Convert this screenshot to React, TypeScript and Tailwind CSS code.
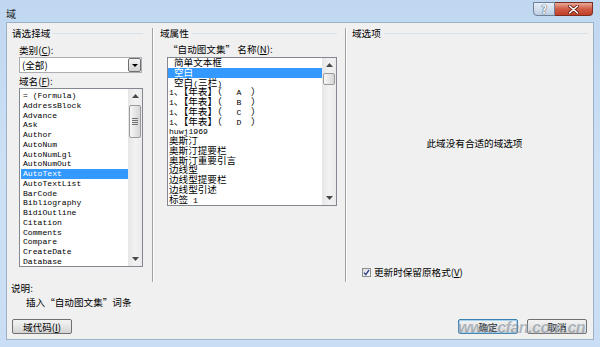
const leftFields = [
  "= (Formula)",
  "AddressBlock",
  "Advance",
  "Ask",
  "Author",
  "AutoNum",
  "AutoNumLgl",
  "AutoNumOut",
  "AutoText",
  "AutoTextList",
  "BarCode",
  "Bibliography",
  "BidiOutline",
  "Citation",
  "Comments",
  "Compare",
  "CreateDate",
  "Database",
];

const autoTextNames = [
  { text: "简单文本框", indent: true },
  { text: "空白", indent: true, selected: true },
  { text: "空白(三栏)", indent: true },
  { text: "1、【年表】（   A  ）" },
  { text: "1、【年表】（   B  ）" },
  { text: "1、【年表】（   C  ）" },
  { text: "1、【年表】（   D  ）" },
  { text: "huwj1969" },
  { text: "奥斯汀" },
  { text: "奥斯汀提要栏" },
  { text: "奥斯汀重要引言" },
  { text: "边线型" },
  { text: "边线型提要栏" },
  { text: "边线型引述" },
  { text: "标签 1" },
];

const isAscii = /^[\x00-\x7f]/;

// SimSun-like: half-width ascii, full-width han
function Mixed({ text }: { text: string }) {
  const parts = text.match(/[\x00-\x7f]+|[^\x00-\x7f]+/g) ?? [];
  return (
    <>
      {parts.map((p, i) =>
        isAscii.test(p) ? (
          <span key={i} className="font-['Liberation_Mono',monospace] text-[8.1px]">
            {p}
          </span>
        ) : (
          <span key={i} className="font-['Noto_Sans_CJK_SC',sans-serif] text-[9.6px]">
            {p}
          </span>
        )
      )}
    </>
  );
}

const Q = ({ c }: { c: string }) => (
  <span className="[font-feature-settings:'fwid']">{c}</span>
);

function GroupHeader({ title, className }: { title: string; className: string }) {
  return (
    <div className={`flex h-[12px] items-center ${className}`}>
      <span className="leading-[12px]">{title}</span>
      <div className="ml-[3px] h-px flex-1 bg-[#d8e0e8]" />
    </div>
  );
}

const UpArrow = () => (
  <svg width="7" height="4" viewBox="0 0 7 4">
    <polygon points="0,4 7,4 3.5,0" fill="#4a4a4a" />
  </svg>
);

const DownArrow = () => (
  <svg width="7" height="4" viewBox="0 0 7 4">
    <polygon points="0,0 7,0 3.5,4" fill="#4a4a4a" />
  </svg>
);

function ScrollBar({ thumb, grip }: { thumb: string; grip?: boolean }) {
  return (
    <div className="flex h-full w-[14px] flex-col bg-gradient-to-r from-[#e6e6e6] via-[#f2f2f2] to-[#ebebeb]">
      <div className="flex h-[14px] shrink-0 items-center justify-center">
        <UpArrow />
      </div>
      <div
        className={`mx-[1px] flex shrink-0 flex-col items-center justify-center gap-[1px] rounded-[2px] border border-[#9a9a9a] bg-gradient-to-r from-[#f7f7f7] to-[#d6d6d6] ${thumb}`}
      >
        {grip && (
          <>
            <div className="h-px w-[6px] bg-[#707070]" />
            <div className="h-px w-[6px] bg-[#707070]" />
            <div className="h-px w-[6px] bg-[#707070]" />
            <div className="h-px w-[6px] bg-[#707070]" />
          </>
        )}
      </div>
      <div className="flex-1" />
      <div className="flex h-[14px] shrink-0 items-center justify-center">
        <DownArrow />
      </div>
    </div>
  );
}

function Button({ label, def, className }: { label: React.ReactNode; def?: boolean; className?: string }) {
  return (
    <div
      className={`flex h-[15px] w-[60px] items-center justify-center rounded-[2px] border bg-gradient-to-b from-[#f3f3f3] via-[#e6e6e6] to-[#d2d2d2] leading-[12px] ${
        def ? "border-[#3c7fb1] shadow-[inset_0_0_0_1px_#a6d4f0]" : "border-[#707070]"
      } ${className ?? ""}`}
    >
      {label}
    </div>
  );
}

export default function App() {
  return (
    <div className="relative flex h-[347px] w-[600px] flex-col overflow-hidden bg-gradient-to-b from-[#bfd7f0] via-[#cde1f5] to-[#c9def4] font-['Noto_Sans_CJK_SC',sans-serif] text-[9.6px] text-black">
      {/* title bar */}
      <div className="flex h-[22px] shrink-0 items-start justify-between pl-[6px] pr-[7px]">
        <div className="mt-[7px] h-[13px] text-[10px] leading-[13px] text-[#1e1e1e]">域</div>
        <div className="mt-[2px] flex">
          <div className="flex h-[14px] w-[22px] items-center justify-center rounded-bl-[4px] border border-[#6f7f96] bg-gradient-to-b from-[#e6eef7] via-[#d3dfee] to-[#bccde2] text-[11px] font-bold leading-none text-white [text-shadow:0_0_1px_#2c3a4f,0_0_1px_#2c3a4f]">
            ?
          </div>
          <div className="flex h-[14px] w-[38px] items-center justify-center rounded-br-[4px] border border-l-0 border-[#7d2b1c] bg-gradient-to-b from-[#e8a897] via-[#d05a44] to-[#c2402a]">
            <svg width="11" height="9" viewBox="0 0 11 9">
              <path d="M1.5 1 L9.5 8 M9.5 1 L1.5 8" stroke="#5a1a10" strokeWidth="3" strokeLinecap="round" />
              <path d="M1.5 1 L9.5 8 M9.5 1 L1.5 8" stroke="#ffffff" strokeWidth="1.6" strokeLinecap="round" />
            </svg>
          </div>
        </div>
      </div>

      {/* client area */}
      <div className="ml-[6px] flex h-[318px] w-[588px] shrink-0 flex-col border border-[#9cb0c7] bg-[#f0f0f0] pt-[4px]">
        <div className="flex h-[255px] shrink-0">
          {/* left: field picker */}
          <div className="flex w-[145px] shrink-0 flex-col pl-[5px]">
            <GroupHeader title="请选择域" className="mr-[9px]" />
            <div className="ml-[7px] mt-[5px] h-[12px] leading-[12px]">
              类别(<u>C</u>):
            </div>
            <div className="ml-[7px] mt-[1px] flex h-[16px] w-[123px] items-center border border-[#abadb3] bg-white">
              <div className="flex-1 pl-[2px] leading-[12px]">(全部)</div>
              <div className="flex h-[14px] w-[13px] items-center justify-center rounded-[2px] border border-[#707070] bg-gradient-to-b from-[#f4f4f4] to-[#d3d3d3]">
                <svg width="6" height="3" viewBox="0 0 6 3">
                  <polygon points="0,0 6,0 3,3" fill="#000" />
                </svg>
              </div>
            </div>
            <div className="ml-[7px] mt-[2px] h-[12px] leading-[12px]">
              域名(<u>F</u>):
            </div>
            <div className="ml-[7px] mt-[1px] flex h-[179px] w-[124px] border border-[#828790] bg-white">
              <div className="flex-1 overflow-hidden pl-[1px] pt-[2px]">
                {leftFields.map((f) => (
                  <div
                    key={f}
                    className={`h-[9.76px] whitespace-pre pl-[2px] font-['Liberation_Mono',monospace] text-[8.1px] leading-[9.76px] ${
                      f === "AutoText" ? "bg-[#3399ff] text-white" : ""
                    }`}
                  >
                    {f}
                  </div>
                ))}
              </div>
              <ScrollBar thumb="mt-[2px] h-[33px]" grip />
            </div>
          </div>

          <div className="mt-[1px] h-[254px] w-px shrink-0 bg-[#a0a0a0]" />
          <div className="mt-[1px] h-[254px] w-px shrink-0 bg-white" />

          {/* middle: field properties */}
          <div className="flex w-[191px] shrink-0 flex-col pl-[6px]">
            <GroupHeader title="域属性" className="mr-[8px]" />
            <div className="ml-[8px] mt-[4px] h-[12px] whitespace-pre leading-[12px]">
              <Q c="“" />
              自动图文集
              <Q c="”" /> 名称(<u>N</u>):
            </div>
            <div className="ml-[7px] mt-[2px] flex h-[149px] w-[170px] border border-[#828790] bg-white">
              <div className="flex-1 overflow-hidden">
                {autoTextNames.map((n, i) => (
                  <div
                    key={i}
                    className={`h-[9.76px] whitespace-pre leading-[9.76px] ${n.indent ? "pl-[6px]" : "pl-[1px]"} ${
                      n.selected ? "bg-[#3399ff] text-white" : ""
                    }`}
                  >
                    <Mixed text={n.text} />
                  </div>
                ))}
              </div>
              <ScrollBar thumb="mt-[1px] h-[12px]" />
            </div>
          </div>

          <div className="mt-[1px] h-[254px] w-px shrink-0 bg-[#a0a0a0]" />
          <div className="mt-[1px] h-[254px] w-px shrink-0 bg-white" />

          {/* right: field options */}
          <div className="flex flex-1 flex-col pl-[5px] pr-[5px]">
            <GroupHeader title="域选项" className="" />
            <div className="mt-[98px] h-[12px] pl-[9px] text-center leading-[12px]">此域没有合适的域选项</div>
            <div className="mt-[117px] flex h-[12px] items-center pl-[10px]">
              <div className="flex h-[9px] w-[9px] items-center justify-center border border-[#8e8f8f] bg-gradient-to-br from-[#dcdcdc] to-[#ffffff]">
                <svg width="7" height="7" viewBox="0 0 7 7">
                  <path d="M1 3.6 L2.8 5.6 L6 1" stroke="#31448c" strokeWidth="1.4" fill="none" />
                </svg>
              </div>
              <span className="ml-[3px] leading-[12px]">
                更新时保留原格式(<u>V</u>)
              </span>
            </div>
          </div>
        </div>

        {/* description */}
        <div className="h-[12px] pl-[4px] leading-[12px]">说明:</div>
        <div className="mt-[2px] h-[12px] whitespace-pre pl-[19px] leading-[12px]">
          插入<Q c="“" />
          自动图文集
          <Q c="”" />
          词条
        </div>

        {/* buttons */}
        <div className="mt-[11px] flex items-center pl-[5px] pr-[6px]">
          <Button
            label={
              <>
                域代码(<u>I</u>)
              </>
            }
          />
          <div className="flex-1" />
          <Button label="确定" def />
          <Button label="取消" className="ml-[9px]" />
        </div>
      </div>

      {/* watermark */}
      <div className="pointer-events-none absolute left-[458px] top-[316px] font-['Liberation_Sans',sans-serif] text-[16px] font-bold italic tracking-[-0.5px] text-[#7d8a96] opacity-55 [text-shadow:0_0_2px_#ffffff]">
        www.cfan.com.cn
      </div>
    </div>
  );
}
